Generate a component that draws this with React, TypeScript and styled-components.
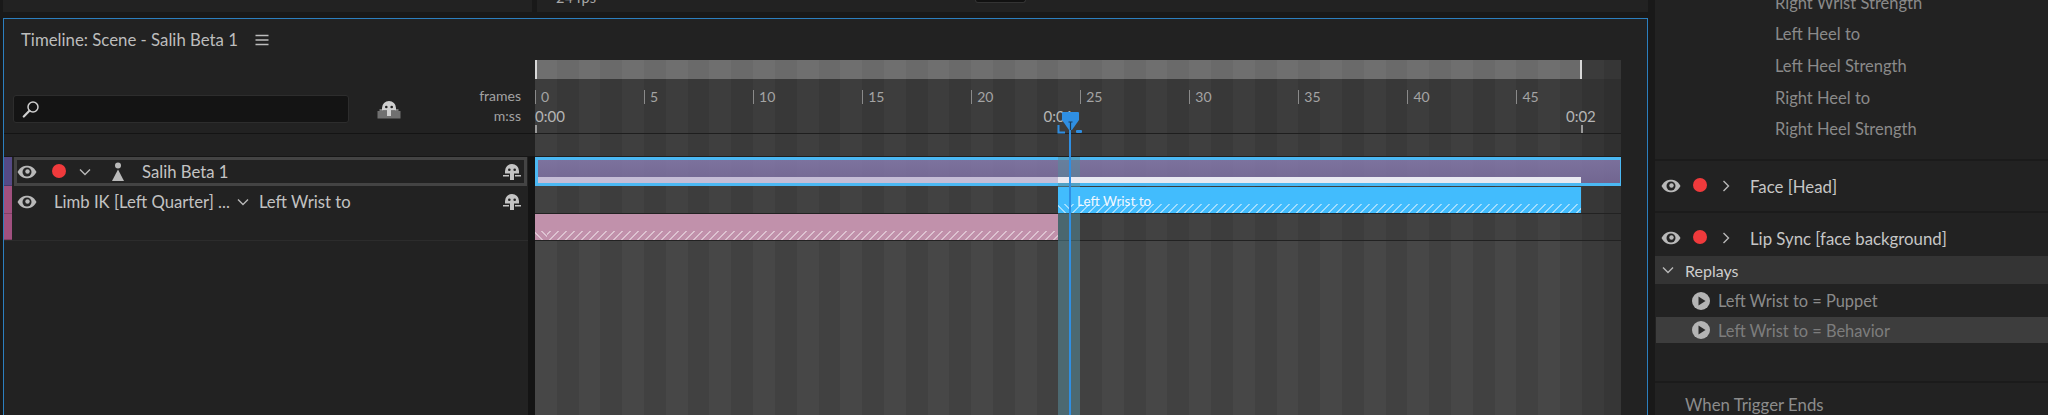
import React from "react";
import styled, { createGlobalStyle, css } from "styled-components";

const FRAME = 21.81;
const stripeStops = (() => {
  const stops: string[] = [];
  for (let i = 0; i < 50; i++) {
    const c = i === 48 ? "#3b3b3b" : i === 49 ? "#363636" : i % 2 === 0 ? "#474747" : "#414141";
    const a = (i * FRAME).toFixed(2);
    const b = ((i + 1) * FRAME).toFixed(2);
    stops.push(`${c} ${a}px ${b}px`);
  }
  return stops.join(",");
})();

const Global = createGlobalStyle`
  html, body { margin: 0; padding: 0; background: #1a1a1a; }
  body { font-family: "Lato", "Liberation Sans", sans-serif; }
  * { box-sizing: border-box; }
`;

const Page = styled.div`
  display: flex;
  width: 2048px;
  height: 415px;
  overflow: hidden;
  background: #191919;
  font-size: 16.7px;
  color: #c4c4c4;
`;

const MainColumn = styled.div`
  width: 1648px;
  display: flex;
  flex-direction: column;
  padding-left: 3px;
`;

const TopStrip = styled.div`
  display: flex;
  height: 12px;
  margin-bottom: 6px;
  flex: none;
  background: #222;
  overflow: hidden;
`;

const TopLeftPane = styled.div`
  width: 534px;
  border-right: 5px solid #191919;
  flex: none;
`;

const FpsLabel = styled.span`
  margin: -11px 0 0 19px;
  font-size: 14.5px;
  line-height: 18px;
  color: #a8a8a8;
`;

const RateBox = styled.div`
  width: 51px;
  height: 3px;
  margin-left: 379px;
  background: #111;
  border: 1px solid #333;
  border-top: none;
  border-radius: 0 0 3px 3px;
`;

const TimelinePanel = styled.section`
  flex: 1;
  min-height: 0;
  display: flex;
  flex-direction: column;
  background: #222;
  border: 1px solid #2c7fbf;
  border-bottom: none;
`;

const PanelHeader = styled.header`
  height: 41px;
  flex: none;
  display: flex;
  align-items: center;
  padding: 0 0 0 17px;
  gap: 17px;
  font-size: 16.8px;
  color: #bdbdbd;
`;

const TimelineBody = styled.div`
  flex: 1;
  min-height: 0;
  display: flex;
`;

const LeftColumn = styled.div`
  width: 531px;
  flex: none;
  display: flex;
  flex-direction: column;
`;

const ControlBar = styled.div`
  height: 74px;
  flex: none;
  display: flex;
  align-items: flex-end;
  padding: 0 14px 10px 9px;
  border-bottom: 1px solid #141414;
`;

const SearchBox = styled.div`
  width: 336px;
  height: 28px;
  background: #141414;
  border: 1px solid #2d2d2d;
  border-radius: 3px;
  display: flex;
  align-items: center;
  padding-left: 8px;
`;

const PreviewIcon = styled.svg`
  width: 24px;
  height: 18px;
  margin: 0 0 4px 28px;
  flex: none;
`;

const RulerLabels = styled.div`
  margin: 0 0 -3px auto;
  display: flex;
  flex-direction: column;
  align-items: flex-end;
  font-size: 14px;
  line-height: 20px;
  color: #a2a2a2;
`;

const BlankBand = styled.div`
  height: 23px;
  flex: none;
  border-bottom: 1px solid #161616;
`;

const Tracks = styled.div`
  flex: 1;
  border-right: 7px solid #141414;
  display: flex;
  flex-direction: column;
`;

const Track = styled.div<{ $h: number; $line?: boolean }>`
  height: ${(p) => p.$h}px;
  flex: none;
  display: flex;
  align-items: stretch;
  ${(p) => p.$line && css`border-bottom: 1px solid #2c2c2c;`}
`;

const ColorTag = styled.div<{ $c: string }>`
  width: 8px;
  flex: none;
  background: ${(p) => p.$c};
  box-shadow: inset 0 -1px 0 rgba(0, 0, 0, 0.2);
`;

const PuppetBox = styled.div`
  flex: 1;
  margin: 0 1px 0 2px;
  display: flex;
  align-items: center;
  border: 3px solid #444;
  padding-right: 2px;
`;

const BehaviorRow = styled.div`
  flex: 1;
  display: flex;
  align-items: center;
  padding: 3px 6px 0 5px;
  color: #c2c2c2;
`;

const Dot = styled.span<{ $ml: number }>`
  width: 14px;
  height: 14px;
  flex: none;
  border-radius: 50%;
  background: #f03a3c;
  margin: -2px 0 0 ${(p) => p.$ml}px;
`;

const IconSlot = styled.svg<{ $ml?: number; $w: number; $h: number }>`
  width: ${(p) => p.$w}px;
  height: ${(p) => p.$h}px;
  flex: none;
  margin-left: ${(p) => p.$ml ?? 0}px;
`;

const TrackName = styled.span<{ $ml: number }>`
  margin-left: ${(p) => p.$ml}px;
  white-space: nowrap;
`;

const RightIconSlot = styled.span`
  margin-left: auto;
  display: flex;
`;

const TimeColumn = styled.div`
  position: relative;
  width: 1086px;
  flex: none;
  display: flex;
  flex-direction: column;
  background: linear-gradient(90deg, ${stripeStops});
`;

const WorkArea = styled.div`
  height: 19px;
  width: 1047px;
  flex: none;
  background: rgba(255, 255, 255, 0.22);
  border-left: 2px solid #d8d8d8;
  border-right: 2px solid #d8d8d8;
`;

const Ruler = styled.div`
  position: relative;
  height: 55px;
  flex: none;
  background: rgba(0, 0, 0, 0.13);
  border-bottom: 1px solid #1e1e1e;
  font-size: 14px;
  color: #a9a9a9;
`;

const FrameTick = styled.span`
  position: absolute;
  top: 11px;
  font-size: 14px;
  line-height: 14px;
  padding-left: 5px;
  border-left: 1px solid #8a8a8a;
  color: #a4a4a4;
`;

const TimeLabel = styled.span<{ $align: "start" | "center" }>`
  position: absolute;
  top: 28px;
  line-height: 18px;
  font-size: 15px;
  color: #b5b5b5;
  transform: ${(p) => (p.$align === "center" ? "translateX(-50%)" : "none")};
`;

const TimeTick = styled.span`
  position: absolute;
  top: 46px;
  width: 2px;
  height: 8px;
  background: #9a9a9a;
`;

const RowBand = styled.div`
  height: 23px;
  flex: none;
  background: rgba(0, 0, 0, 0.1);
  border-bottom: 1px solid #1e1e1e;
`;

const SceneClip = styled.div`
  height: 29px;
  flex: none;
  display: flex;
  flex-direction: column;
  justify-content: flex-end;
  background: linear-gradient(180deg, rgba(134, 122, 173, 0.85), rgba(124, 110, 160, 0.85));
  border: 3px solid #4bb8f3;
  border-right-width: 1px;
`;

const ClipStripes = styled.div`
  position: relative;
  z-index: 2;
  display: flex;
  height: 6px;
  width: 1044px;
`;

const Strip = styled.div<{ $w: number; $c: string }>`
  width: ${(p) => p.$w}px;
  flex: none;
  background: ${(p) => p.$c};
`;

const ClipRow = styled.div<{ $h: number }>`
  height: ${(p) => p.$h}px;
  flex: none;
  border-bottom: 1px solid #222;
  background: rgba(0, 0, 0, 0.06);
`;

const hatchFill = (alpha: number) =>
  `repeating-linear-gradient(135deg, transparent 0 4.4px, rgba(255,255,255,${alpha}) 4.4px 5.66px)`;

const BlueClip = styled.div`
  position: relative;
  z-index: 2;
  margin: 1px 0 0 523px;
  width: 523px;
  height: 26px;
  background: #42bcfd;
  color: #f2f8ff;
  font-size: 13.5px;
  line-height: 28px;
  padding: 0 0 0 19px;
  overflow: hidden;
`;

const PinkClip = styled.div`
  position: relative;
  width: 523px;
  height: 26px;
  background: #c191ab;
  overflow: hidden;
`;

const Hatch = styled.div<{ $alpha: number }>`
  position: absolute;
  left: 0;
  right: 0;
  bottom: 0;
  height: 9px;
  background: ${(p) => hatchFill(p.$alpha)};
`;

const HatchStart = styled.div<{ $alpha: number; $base: string }>`
  position: absolute;
  left: 0;
  bottom: 0;
  width: 12px;
  height: 9px;
  background: repeating-linear-gradient(45deg, transparent 0 4.4px, rgba(255,255,255,${(p) => p.$alpha}) 4.4px 5.66px), ${(p) => p.$base};
`;

const PlayBand = styled.div`
  position: absolute;
  z-index: 1;
  left: 523px;
  top: 97px;
  bottom: 0;
  width: 22px;
  background: rgba(82, 140, 156, 0.5);
`;

const PlayLine = styled.div`
  position: absolute;
  z-index: 3;
  left: 534px;
  top: 70px;
  bottom: 0;
  width: 2px;
  background: #2f8fe3;
`;

const PlayHead = styled.svg`
  position: absolute;
  z-index: 3;
  left: 521px;
  top: 50px;
  width: 28px;
  height: 24px;
`;

const SidePanel = styled.aside`
  width: 393px;
  margin-left: 7px;
  flex: none;
  display: flex;
  flex-direction: column;
  background: #222;
  color: #8c8c8c;
`;

const ParamList = styled.div`
  margin-top: -13px;
  height: 174px;
  flex: none;
  border-bottom: 2px solid #1b1b1b;
`;

const Param = styled.div`
  height: 31.6px;
  display: flex;
  align-items: center;
  padding-left: 120px;
  font-size: 16.5px;
  color: #8a8a8a;
`;

const SideRow = styled.div<{ $h: number; $line?: boolean; $pt?: number }>`
  height: ${(p) => p.$h}px;
  flex: none;
  display: flex;
  align-items: center;
  padding: ${(p) => p.$pt ?? 0}px 0 0 6px;
  color: #c6c6c6;
  font-size: 16.8px;
  ${(p) => p.$line && css`border-bottom: 2px solid #1b1b1b;`}
`;

const SectionHeader = styled.div`
  height: 28px;
  flex: none;
  display: flex;
  align-items: center;
  padding-left: 7px;
  gap: 11px;
  background: #343434;
  color: #cdcdcd;
  font-size: 16px;
`;

const Replay = styled.div<{ $active?: boolean; $h: number; $color: string }>`
  height: ${(p) => p.$h}px;
  flex: none;
  margin-left: 1px;
  display: flex;
  align-items: center;
  padding-left: 36px;
  gap: 8px;
  font-size: 16.4px;
  color: ${(p) => p.$color};
  background: ${(p) => (p.$active ? "#3d3d3d" : "transparent")};
`;

const Spacer = styled.div`
  height: 40px;
  flex: none;
  border-bottom: 2px solid #1b1b1b;
`;

const FooterLabel = styled.div`
  padding: 11px 0 0 30px;
  font-size: 16.8px;
  color: #8c8c8c;
`;

const HamburgerIcon = () => (
  <IconSlot $w={14} $h={12} viewBox="0 0 14 12">
    <path d="M0.5 1.5h13M0.5 6h13M0.5 10.5h13" stroke="#bdbdbd" strokeWidth="1.3" />
  </IconSlot>
);

const EyeIcon = ({ ml = 0 }: { ml?: number }) => (
  <IconSlot $ml={ml} $w={20} $h={14} viewBox="0 0 20 14">
    <path d="M0.5 7C4 1.2 7 0.8 10 0.8S16 1.2 19.5 7C16 12.8 13 13.2 10 13.2S4 12.8 0.5 7Z" fill="#b9b9b9" />
    <circle cx="10" cy="7" r="4.5" fill="#242424" />
    <circle cx="10.5" cy="6.5" r="2.2" fill="#b9b9b9" />
  </IconSlot>
);

const Chevron = ({ dir, ml = 0, color = "#b8b8b8" }: { dir: "down" | "right"; ml?: number; color?: string }) => (
  <IconSlot $ml={ml} $w={12} $h={12} viewBox="0 0 12 12">
    <path d={dir === "down" ? "M1 3.5l5 5 5-5" : "M3.5 1l5 5-5 5"} fill="none" stroke={color} strokeWidth="1.4" />
  </IconSlot>
);

const PuppetIcon = ({ ml = 0 }: { ml?: number }) => (
  <IconSlot $ml={ml} $w={14} $h={20} viewBox="0 0 14 20">
    <circle cx="7" cy="3.5" r="3" fill="#b9b9b9" />
    <path d="M7 7.5L13 19H1Z" fill="#b9b9b9" />
  </IconSlot>
);

const ArmIcon = () => (
  <IconSlot $w={20} $h={18} viewBox="0 0 20 18">
    <path d="M3 8a7 7 0 0 1 14 0v2.5h-5V17H8v-6.5H3Z" fill="#c4c4c4" />
    <circle cx="7.3" cy="6.8" r="1.3" fill="#222" />
    <circle cx="12.7" cy="6.8" r="1.3" fill="#222" />
    <path d="M1 12.8h6M13 12.8h6" stroke="#c4c4c4" strokeWidth="1.5" />
  </IconSlot>
);

const SearchIcon = () => (
  <IconSlot $w={18} $h={18} viewBox="0 0 18 18">
    <circle cx="11" cy="7" r="5" fill="none" stroke="#cfcfcf" strokeWidth="1.5" />
    <path d="M7.4 10.8L1.8 16.5" stroke="#cfcfcf" strokeWidth="2.2" strokeLinecap="round" />
  </IconSlot>
);

const PlayCircle = () => (
  <IconSlot $w={18} $h={18} viewBox="0 0 18 18">
    <circle cx="9" cy="9" r="9" fill="#b4b4b4" />
    <path d="M6.5 4.5L13.5 9l-7 4.5Z" fill="#2a2a2a" />
  </IconSlot>
);

const frames = [0, 5, 10, 15, 20, 25, 30, 35, 40, 45];

const App = () => (
  <>
    <Global />
    <Page>
      <MainColumn>
        <TopStrip>
          <TopLeftPane />
          <FpsLabel>24 fps</FpsLabel>
          <RateBox />
        </TopStrip>
        <TimelinePanel>
          <PanelHeader>
            <span>Timeline: Scene - Salih Beta 1</span>
            <HamburgerIcon />
          </PanelHeader>
          <TimelineBody>
            <LeftColumn>
              <ControlBar>
                <SearchBox>
                  <SearchIcon />
                </SearchBox>
                <PreviewIcon viewBox="0 0 24 18">
                  <rect x="0.5" y="10" width="23" height="7.5" fill="#707070" />
                  <path d="M5 7a7 7 0 0 1 14 0v2.5h-5V15h-4V9.5H5Z" fill="#cfcfcf" />
                  <circle cx="9.3" cy="6" r="1.3" fill="#222" />
                  <circle cx="14.7" cy="6" r="1.3" fill="#222" />
                  <path d="M2.5 9h3M18.5 9h3" stroke="#cfcfcf" strokeWidth="1.2" />
                </PreviewIcon>
                <RulerLabels>
                  <span>frames</span>
                  <span>m:ss</span>
                </RulerLabels>
              </ControlBar>
              <BlankBand />
              <Tracks>
                <Track $h={29}>
                  <ColorTag $c="#554a86" />
                  <PuppetBox>
                    <EyeIcon />
                    <Dot $ml={15} />
                    <Chevron dir="down" ml={13} />
                    <PuppetIcon ml={20} />
                    <TrackName $ml={17}>Salih Beta 1</TrackName>
                    <RightIconSlot>
                      <ArmIcon />
                    </RightIconSlot>
                  </PuppetBox>
                </Track>
                <Track $h={28}>
                  <ColorTag $c="#a0507f" />
                  <BehaviorRow>
                    <EyeIcon />
                    <TrackName $ml={17}>Limb IK [Left Quarter] ...</TrackName>
                    <Chevron dir="down" ml={7} />
                    <TrackName $ml={10}>Left Wrist to</TrackName>
                    <RightIconSlot>
                      <ArmIcon />
                    </RightIconSlot>
                  </BehaviorRow>
                </Track>
                <Track $h={27} $line>
                  <ColorTag $c="#a0507f" />
                </Track>
              </Tracks>
            </LeftColumn>
            <TimeColumn>
              <WorkArea />
              <Ruler>
                {frames.map((f) => (
                  <FrameTick key={f} style={{ left: f * FRAME }}>
                    {f}
                  </FrameTick>
                ))}
                <TimeLabel $align="start" style={{ left: 0 }}>0:00</TimeLabel>
                <TimeLabel $align="center" style={{ left: 24 * FRAME }}>0:01</TimeLabel>
                <TimeLabel $align="center" style={{ left: 48 * FRAME - 1 }}>0:02</TimeLabel>
                <TimeTick style={{ left: 0 }} />
                <TimeTick style={{ left: 48 * FRAME - 1 }} />
              </Ruler>
              <RowBand />
              <SceneClip>
                <ClipStripes>
                  <Strip $w={520} $c="#c5bdd6" />
                  <Strip $w={523} $c="#e9e9f1" />
                </ClipStripes>
              </SceneClip>
              <ClipRow $h={28}>
                <BlueClip>
                  Left Wrist to
                  <Hatch $alpha={0.5} />
                  <HatchStart $alpha={0.5} $base="#42bcfd" />
                </BlueClip>
              </ClipRow>
              <ClipRow $h={27}>
                <PinkClip>
                  <Hatch $alpha={0.45} />
                  <HatchStart $alpha={0.45} $base="#c191ab" />
                </PinkClip>
              </ClipRow>
              <PlayBand />
              <PlayLine />
              <PlayHead viewBox="0 0 28 24">
                <path d="M6 2.5Q6 2 7 2h15q1 0 1 .5v7.5L16 20h-3L6 10Z" fill="#2f8fe3" />
                <path d="M2.5 15v7.5H9" fill="none" stroke="#2f8fe3" strokeWidth="2" />
                <rect x="20" y="20" width="6" height="3" rx="1" fill="#2f8fe3" />
                <path d="M12.5 12h4M14.5 12v8" stroke="#1d3a55" strokeWidth="1.2" />
              </PlayHead>
            </TimeColumn>
          </TimelineBody>
        </TimelinePanel>
      </MainColumn>
      <SidePanel>
        <ParamList>
          <Param>Right Wrist Strength</Param>
          <Param>Left Heel to</Param>
          <Param>Left Heel Strength</Param>
          <Param>Right Heel to</Param>
          <Param>Right Heel Strength</Param>
        </ParamList>
        <SideRow $h={52} $line>
          <EyeIcon />
          <Dot $ml={12} />
          <Chevron dir="right" ml={13} />
          <TrackName $ml={18}>Face [Head]</TrackName>
        </SideRow>
        <SideRow $h={43} $pt={7}>
          <EyeIcon />
          <Dot $ml={12} />
          <Chevron dir="right" ml={13} />
          <TrackName $ml={18}>Lip Sync [face background]</TrackName>
        </SideRow>
        <SectionHeader>
          <Chevron dir="down" />
          <span>Replays</span>
        </SectionHeader>
        <Replay $h={33} $color="#8b8b8b">
          <PlayCircle />
          <span>Left Wrist to = Puppet</span>
        </Replay>
        <Replay $h={26} $active $color="#7d7d7d">
          <PlayCircle />
          <span>Left Wrist to = Behavior</span>
        </Replay>
        <Spacer />
        <FooterLabel>When Trigger Ends</FooterLabel>
      </SidePanel>
    </Page>
  </>
);

export default App;
